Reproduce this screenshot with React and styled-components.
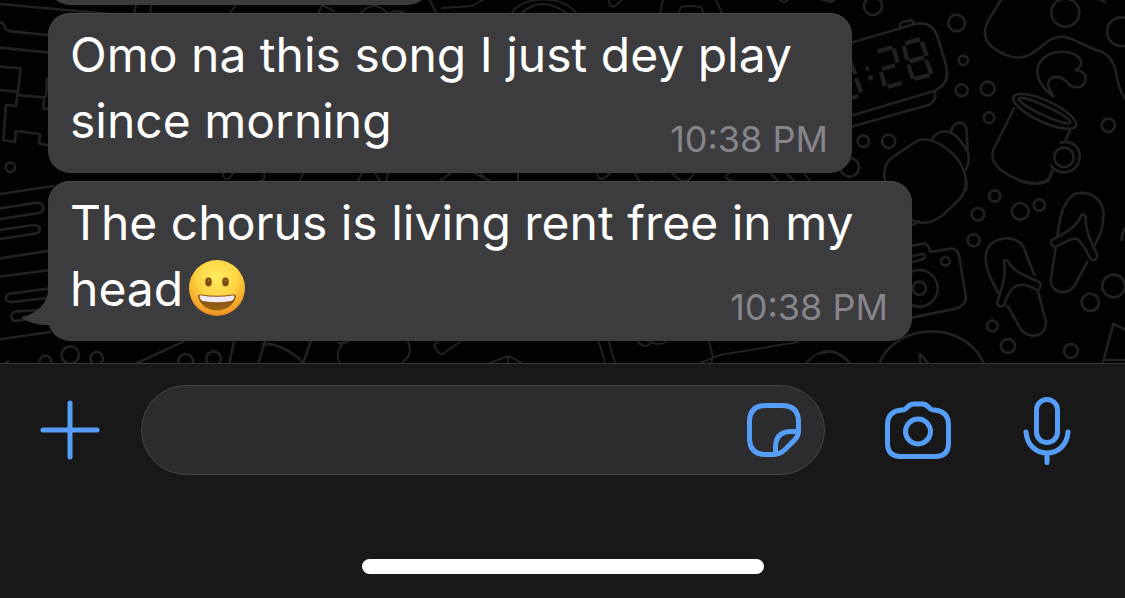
import React from 'react';
import styled, { createGlobalStyle } from 'styled-components';

const GlobalStyle = createGlobalStyle`
	* {
		box-sizing: border-box;
	}

	body {
		margin: 0;
		background: #181818;
		font-family: Inter, 'Liberation Sans', sans-serif;
	}
`;

const Screen = styled.main`
	display: flex;
	flex-direction: column;
	height: 100vh;
`;

const Chat = styled.section`
	position: relative;
	flex: 1;
	min-height: 0;
	overflow: hidden;
	display: flex;
	flex-direction: column;
	justify-content: flex-end;
	padding: 0 24px 22px 48px;
	background: #020203;
`;

const Doodles = styled.svg`
	position: absolute;
	left: 0;
	bottom: 0;
	width: 1125px;
	height: 363px;
	fill: none;
	stroke: #212123;
	stroke-linecap: round;
	stroke-linejoin: round;
`;

const MessageList = styled.ol`
	position: relative;
	display: flex;
	flex-direction: column;
	align-items: flex-start;
	gap: 8px;
	margin: 0;
	padding: 0;
	list-style: none;
`;

const Bubble = styled.li`
	position: relative;
	display: grid;
	width: ${(props) => props.$width}px;
	max-width: 100%;
	min-height: 60px;
	padding: 9px 24px 14px 22px;
	border-radius: 22px;
	background: #3c3c3e;
	box-shadow: inset 0 1px 0 #4a4a4c;
	color: #fff;
`;

const Text = styled.p`
	grid-area: 1 / 1;
	margin: 0;
	padding-bottom: 5px;
	font-size: 48px;
	line-height: 66px;
`;

const Time = styled.time`
	grid-area: 1 / 1;
	place-self: end;
	font-size: 36px;
	line-height: 40px;
	color: #86858a;
`;

const Tail = styled.svg`
	position: absolute;
	left: -26px;
	bottom: 14px;
	width: 34px;
	height: 52px;
	fill: #3c3c3e;
`;

const EmojiIcon = styled.svg`
	width: 58px;
	height: 58px;
	margin-left: 5px;
	vertical-align: -12px;
`;

const Composer = styled.footer`
	display: flex;
	flex-direction: column;
	align-items: center;
	gap: 84px;
	padding: 21px 0 24px;
	border-top: 1px solid #38383a;
	background: #181818;
`;

const Toolbar = styled.form`
	display: flex;
	align-items: center;
	width: 100%;
	padding: 0 54px 0 40px;
`;

const IconButton = styled.button`
	display: flex;
	flex: none;
	margin: 0;
	margin-left: ${(props) => props.$gap || 0}px;
	padding: 0;
	border: 0;
	background: none;
	color: #559df6;
	cursor: pointer;

	svg {
		display: block;
		fill: none;
		stroke: currentColor;
		stroke-width: 5;
		stroke-linecap: round;
		stroke-linejoin: round;
	}
`;

const Field = styled.div`
	flex: 1;
	display: flex;
	align-items: center;
	min-width: 0;
	height: 90px;
	margin-left: 41px;
	padding: 0 22px 0 32px;
	border: 1px solid #444446;
	border-radius: 45px;
	background: #2c2c2e;
`;

const Input = styled.input`
	flex: 1;
	min-width: 0;
	height: 66px;
	padding: 0;
	border: 0;
	outline: 0;
	background: none;
	color: #fff;
	font: inherit;
	font-size: 48px;
`;

const HomeIndicator = styled.div`
	width: 402px;
	height: 15px;
	border-radius: 8px;
	background: #fff;
`;

function Wallpaper() {
	return (
		<Doodles viewBox="0 0 1125 363" aria-hidden="true">
			{/* clock, tree and mug, top right */}
			<g transform="translate(820 0) scale(0.3333)" strokeWidth="8">
				<circle cx="159" cy="18" r="27" />
				<circle cx="410" cy="69" r="25" />
				<circle cx="430" cy="181" r="14" />
				<circle cx="425" cy="271" r="18" />
				<circle cx="503" cy="266" r="21" />
				<circle cx="507" cy="353" r="16" />
				<circle cx="736" cy="38" r="42" />
				<circle cx="904" cy="95" r="43" />
				<circle cx="865" cy="376" r="20" />
				<circle cx="130" cy="424" r="17" />
				<circle cx="206" cy="424" r="20" />
				<circle cx="89" cy="502" r="28" />
				<path d="M0 -4q20 10 40 4M835 -4l20 10" />
				<path d="M60 138L285 72Q335 62 352 108L378 195Q392 250 345 272L60 357M60 390L325 315Q350 305 345 275M241 80q-4-12 10-15l20-4q8 0 10 10" />
				<g strokeWidth="13" strokeLinecap="butt">
					<path d="M173 154l44-12M221 146l12 42M186 207l39-11M183 216l12 42M203 261l42-12" />
					<path d="M255 130l44-12M251 138l11 42M305 125l15 42M268 184l44-12M265 194l14 42M318 180l17 42M284 237l44-12" />
					<path d="M136 206h11M145 234h14M90 186l17 36M108 235l15 42M90 295l25-6" />
				</g>
				<path d="M545-4L503 65Q482 110 515 140Q570 182 615 170C660 156 680 110 725 110C760 110 800 145 845 155Q875 170 885 205C895 250 895 265 915 295" />
				<path d="M700 290C655 255 640 215 662 183C690 148 760 145 782 180Q790 200 766 210Q805 215 795 245C785 270 755 265 740 245C715 220 680 230 685 260Z" />
				<ellipse cx="674" cy="334" rx="103" ry="32" transform="rotate(25 674 334)" />
				<ellipse cx="674" cy="332" rx="86" ry="14" transform="rotate(25 674 332)" />
				<path d="M582 325L520 450Q510 480 540 508C590 545 630 553 665 550Q690 545 697 512M749 392l-13 32" />
				<circle cx="732" cy="472" r="29" />
				<path d="M722 428C765 420 785 450 778 480C768 520 720 530 693 498" />
				<path d="M200 570C185 510 195 485 225 467L290 423Q320 410 365 435C410 465 445 510 438 570M335 418C365 375 405 395 430 435Q458 465 438 508M393 394C402 360 440 358 440 395L443 450" />
			</g>

			{/* camera and flip-flops */}
			<g transform="translate(820 180) scale(0.3333)" strokeWidth="8">
				<path d="M438 0C440 35 425 55 390 85Q330 150 270 118M280 135l16-12M595 0q45 22 92 0" />
				<circle cx="524" cy="48" r="17" />
				<circle cx="474" cy="103" r="19" />
				<circle cx="601" cy="94" r="25" />
				<circle cx="658" cy="75" r="17" />
				<circle cx="461" cy="181" r="18" />
				<circle cx="881" cy="318" r="34" />
				<circle cx="811" cy="367" r="26" />
				<circle cx="517" cy="438" r="16" />
				<circle cx="564" cy="498" r="21" />
				<circle cx="753" cy="513" r="21" />
				<path d="M265 200l45-9q16-2 20 25l60-10q20-2 27 20l20 120q5 30-30 40L265 415M265 230l42-8q14 4 5 14l-47 14" />
				<circle cx="376" cy="244" r="13" />
				<circle cx="298" cy="325" r="55" />
				<circle cx="298" cy="325" r="20" />
				<path d="M536 340C500 280 485 225 510 195C545 165 590 170 610 200L643 285M655 338L678 425C680 465 640 480 605 452L563 378" />
				<path d="M552 245Q558 232 568 250Q580 275 655 304Q670 315 655 332Q610 305 585 320Q570 325 552 375Q540 387 531 370C545 320 560 295 552 245Z" />
				<path d="M712 168C720 110 730 60 765 42C810 28 855 60 850 110C850 145 840 165 825 195M802 245L765 315C740 350 695 340 692 300L707 205" />
				<path d="M783 108Q792 95 797 112Q795 155 832 225Q830 245 812 238Q790 190 770 176Q755 174 708 200Q690 200 695 180Q770 145 783 108Z" />
				<path d="M178 550C225 430 430 415 492 550M300 550v-28l25 28M848 550L880 432L915 448M855 540h60M0 520q50-18 90 30M905 180q0-20 10-35" />
			</g>

			{/* left edge */}
			<g transform="scale(0.3333)" strokeWidth="8">
				<path d="M0 12L330 42M0 67q12 0 14 15q5 12 20 12L150 106M0 143L150 158M0 200L62 205L54 275L0 270M54 275L48 318L18 315L10 420L45 426L48 393L120 402L118 430L150 438M60 286L132 292L130 325L150 328M142 235l-4 55" />
				<circle cx="31" cy="502" r="14" />
				<path d="M0 582L160 558M0 625L110 608Q132 610 130 625Q128 640 110 640L0 657M0 690L100 675Q120 676 120 688Q118 700 104 701L0 717M0 775L150 752M0 830L150 810M150 865L35 880Q16 882 18 896Q20 908 38 906L150 893M150 928L50 934Q32 938 34 952Q36 966 54 962L90 956M0 1018L150 996" />
				<circle cx="136" cy="1085" r="18" />
				<circle cx="211" cy="1065" r="26" />
				<circle cx="290" cy="1075" r="19" />
				<circle cx="557" cy="1084" r="22" />
				<circle cx="641" cy="1076" r="22" />
				<path d="M410 1090L550 1025M702 1025L688 1090M795 1025L775 1090M788 1032Q850 1030 910 1088L932 1025M15 1090l10-6" />
			</g>

			{/* strips between the bubbles */}
			<g strokeWidth="2">
				<path d="M137 0l-3 14M152 0l-2 14M236 5l-6 8M318 14l4-9l12 6M360 14q14-16 28 0q10-6 18 0M430 0l6 13M442 8l30-2l14-8M512 13c10-18 52-18 64 0M522 13q20-18 44 0M609 0q0 8 6 6l8-7M663 0l-3 13M679 12l2-5q10-2 20 0l2 5M716 0l6 13M780 0q4 4 8 0M826 0q5 4 9 0" />
				<path d="M222 172q4 14 11 1M264 173q2 7-4 8M303 173l-3 8M358 181l4-8M375 173l5 8M388 173l-2 8M440 181q18-16 34-8l16 8M480 173l8 8M518 173v8M597 173q2 12 13 0M635 173q5 14 18 8M672 173q14 16 22 0M734 181q-14-3-4-8M770 173l8 8M786 173l8 8M804 173l6 8" />
				<path d="M344 342q-10 10-4 21M338 343q8 0 10-1M408 342q6 12-6 21M434 345q5 12 10 8l16-11M434 345l4-3M490 363l18-7l14 7M508 356v7M599 342l6 21M609 342l6 21M638 342q8 8 13 0q8 4 15 0M709 342l4 15M700 363l20-8l78-13M713 357l-2 6M806 363q22-24 44 0" />
			</g>
		</Doodles>
	);
}

function GrinningFace() {
	return (
		<EmojiIcon viewBox="0 0 58 58" role="img" aria-label="grinning face">
			<defs>
				<radialGradient id="face" cx="0.5" cy="0.3" r="0.7">
					<stop offset="0" stopColor="#ffec62" />
					<stop offset="0.5" stopColor="#fdd544" />
					<stop offset="0.82" stopColor="#f8ac2b" />
					<stop offset="1" stopColor="#e88722" />
				</radialGradient>
				<linearGradient id="mouth" x1="0" y1="0" x2="0" y2="1">
					<stop offset="0" stopColor="#80460f" />
					<stop offset="1" stopColor="#9a6415" />
				</linearGradient>
			</defs>
			<circle cx="29" cy="28" r="28" fill="url(#face)" />
			<ellipse cx="20.5" cy="22" rx="3.3" ry="4.4" fill="#7a4a12" />
			<ellipse cx="37.5" cy="22" rx="3.3" ry="4.4" fill="#7a4a12" />
			<circle cx="20.8" cy="20.5" r="1.1" fill="#a87838" />
			<circle cx="37.8" cy="20.5" r="1.1" fill="#a87838" />
			<path d="M10 36Q10 34 13 34.500Q29 37 45 34.500Q48 34 48 36C46.500 45 38 50.500 29 50.500S11.500 45 10 36Z" fill="url(#mouth)" />
			<path d="M11.500 36Q12 35 14 35.500Q29 38 44 35.500Q46 35 46.500 36Q46 40.500 43 41Q29 43.500 15 41Q12 40.500 11.500 36Z" fill="#eeeaf0" />
		</EmojiIcon>
	);
}

export default function App() {
	return (
		<Screen>
			<GlobalStyle />
			<Chat>
				<Wallpaper />
				<MessageList>
					<Bubble $width={382} aria-hidden="true" />
					<Bubble $width={804}>
						<Text>
							Omo na this song I just dey play
							<br />
							since morning
						</Text>
						<Time dateTime="22:38">10:38 PM</Time>
					</Bubble>
					<Bubble $width={864}>
						<Tail viewBox="0 0 34 52" aria-hidden="true">
							<path d="M34 8H26V16C25 29 14 39 1 41.500C-1 42.500 0 43.500 3 45C11 49 19 50.500 27 50L34 52Z" />
						</Tail>
						<Text>
							The chorus is living rent free in my
							<br />
							head
							<GrinningFace />
						</Text>
						<Time dateTime="22:38">10:38 PM</Time>
					</Bubble>
				</MessageList>
			</Chat>
			<Composer>
				<Toolbar onSubmit={(e) => e.preventDefault()}>
					<IconButton type="button" aria-label="Attach">
						<svg width="60" height="60" viewBox="0 0 60 60">
							<path d="M30 3v54M3 30h54" />
						</svg>
					</IconButton>
					<Field>
						<Input type="text" aria-label="Message" />
						<IconButton type="button" aria-label="Stickers">
							<svg width="56" height="56" viewBox="0 0 56 56">
								<path d="M20 3.500H36Q52.500 3.500 52.500 20V29Q52.500 34 48.500 38L39 47.500Q33.500 52.500 28 52.500H20Q3.500 52.500 3.500 36V20Q3.500 3.500 20 3.500Z" />
								<path d="M52 29.500H44Q30 30.500 29.500 44V52" />
							</svg>
						</IconButton>
					</Field>
					<IconButton type="button" aria-label="Camera" $gap={60}>
						<svg width="66" height="58" viewBox="0 0 66 58">
							<path d="M17 9Q20 9 22 6.500Q25 3 29 3H37Q41 3 44 6.500Q46 9 49 9Q63.500 10 63.500 24V42Q63.500 55.500 50 55.500H16Q2.500 55.500 2.500 42V24Q2.500 10 17 9Z" />
							<circle cx="33" cy="30.500" r="12.500" />
						</svg>
					</IconButton>
					<IconButton type="button" aria-label="Record voice message" $gap={72}>
						<svg width="48" height="70" viewBox="0 0 48 70">
							<rect x="13.500" y="4.500" width="21" height="43" rx="10.500" />
							<path d="M3 37C4 50 13 58 24 58S44 50 45 37M24 58V67.500" />
						</svg>
					</IconButton>
				</Toolbar>
				<HomeIndicator />
			</Composer>
		</Screen>
	);
}
